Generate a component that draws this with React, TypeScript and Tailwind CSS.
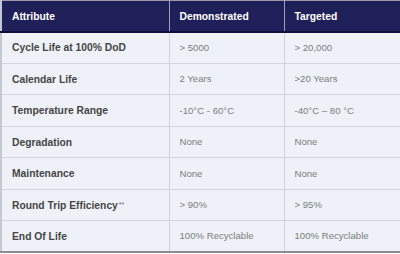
const rows: [string, string, string][] = [
  ["Cycle Life at 100% DoD", "> 5000", "> 20,000"],
  ["Calendar Life", "2 Years", ">20 Years"],
  ["Temperature Range", "-10°C - 60°C", "-40°C – 80 °C"],
  ["Degradation", "None", "None"],
  ["Maintenance", "None", "None"],
  ["Round Trip Efficiency", "> 90%", "> 95%"],
  ["End Of Life", "100% Recyclable", "100% Recyclable"],
];

export default function App() {
  return (
    <div className="w-[400px] h-[254px] bg-white overflow-hidden font-['Liberation_Sans',Arial,sans-serif]">
      <table className="w-[400px] border-collapse table-fixed border-t border-l-2 border-b-2 border-t-[#9a9aa6] border-l-[#c4c8d0] border-b-[#8c8c94]">
        <colgroup>
          <col className="w-[168px]" />
          <col className="w-[115px]" />
          <col className="w-[117px]" />
        </colgroup>
        <thead>
          <tr className="h-[31px] bg-[#1f2059] border-b-2 border-b-[#0f1040]">
            <th className="text-left pl-[10px] pt-px text-white text-[10.3px] font-bold">Attribute</th>
            <th className="text-left pl-[10px] pt-px text-white text-[10.3px] font-bold border-l border-l-[#9ea0b8]">
              Demonstrated
            </th>
            <th className="text-left pl-[10px] pt-px text-white text-[10.3px] font-bold border-l border-l-[#9ea0b8]">
              Targeted
            </th>
          </tr>
        </thead>
        <tbody>
          {rows.map((r, i) => (
            <tr key={i} className="h-[31.5px] bg-[#eef2f8] border-b border-b-[#cfd4dc] last:border-b-0">
              <td className="pl-[10px] pt-px text-[10.3px] font-bold text-[#454545]">
                {r[0]}
                {i === 5 && (
                  <span className="text-[7px] font-normal text-[#666] align-[2px] ml-px">**</span>
                )}
              </td>
              <td className="pl-[10px] pt-px text-[9.6px] text-[#7c7c7c] border-l border-l-[#cfd4dc]">{r[1]}</td>
              <td className="pl-[10px] pt-px text-[9.6px] text-[#7c7c7c] border-l border-l-[#cfd4dc]">{r[2]}</td>
            </tr>
          ))}
        </tbody>
      </table>
    </div>
  );
}
